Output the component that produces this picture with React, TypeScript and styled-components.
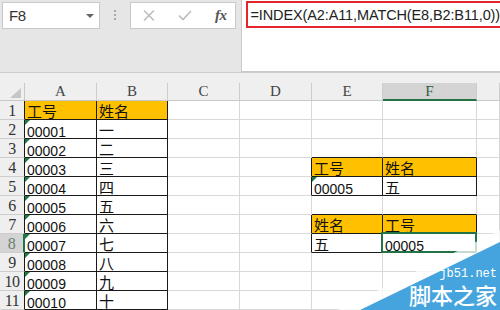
import React from "react";
import styled, { createGlobalStyle } from "styled-components";

const GlobalStyle = createGlobalStyle`
  html, body {
    margin: 0;
    padding: 0;
    background: #ffffff;
    overflow: hidden;
  }
  * {
    box-sizing: border-box;
  }
`;

// last column is only partly on screen, so its letter is not visible
const COLS = ["A", "B", "C", "D", "E", "F", ""];
const ROW_COUNT = 11;
const SELECTED = { col: 5, row: 8 };

type CellData = { text: string; fill?: boolean; tri?: boolean };

const NUMERALS = ["一", "二", "三", "四", "五", "六", "七", "八", "九", "十"];

const cells: Record<string, CellData> = {
  A1: { text: "工号", fill: true },
  B1: { text: "姓名", fill: true },
  E4: { text: "工号", fill: true },
  F4: { text: "姓名", fill: true },
  E5: { text: "00005", tri: true },
  F5: { text: "五" },
  E7: { text: "姓名", fill: true },
  F7: { text: "工号", fill: true },
  E8: { text: "五" },
  F8: { text: "00005" },
};
NUMERALS.forEach((n, i) => {
  cells[`A${i + 2}`] = { text: `0000${i + 1}`.slice(-5), tri: true };
  cells[`B${i + 2}`] = { text: n };
});

// ranges that carry thin black borders
const boxes = [
  { c1: 0, c2: 1, r1: 1, r2: 11 },
  { c1: 4, c2: 5, r1: 4, r2: 5 },
  { c1: 4, c2: 5, r1: 7, r2: 8 },
];

const isBoxed = (c: number, r: number) =>
  boxes.some((b) => c >= b.c1 && c <= b.c2 && r >= b.r1 && r <= b.r2);

const GRID = "#d9d9d9";
const INK = "#1a1a1a";
const GREEN = "#217346";

const Page = styled.div`
  position: relative;
  width: 500px;
  height: 310px;
  overflow: hidden;
  display: flex;
  flex-direction: column;
  font-family: "Liberation Sans", "Noto Sans CJK SC", sans-serif;
`;

const Toolbar = styled.div`
  display: flex;
  align-items: flex-start;
  flex: none;
  height: 72px;
  padding-left: 2px;
  background: #e6e6e6;
`;

const NameBox = styled.div`
  display: flex;
  align-items: center;
  justify-content: space-between;
  width: 100px;
  height: 27px;
  margin-top: 2px;
  padding: 0 5px 0 6px;
  background: #ffffff;
  border: 1px solid #c9c9c9;
  color: #333;
  font-size: 15px;
  letter-spacing: -0.5px;
`;

const Caret = styled.span`
  width: 0;
  height: 0;
  border-left: 4px solid transparent;
  border-right: 4px solid transparent;
  border-top: 4px solid #666;
`;

const Grip = styled.div`
  display: flex;
  flex-direction: column;
  align-items: center;
  gap: 2px;
  width: 31px;
  padding-top: 10px;
`;

const GripDot = styled.span`
  width: 2px;
  height: 2px;
  background: #a9a9a9;
`;

const FxBox = styled.div`
  display: flex;
  align-items: center;
  gap: 23px;
  width: 108px;
  height: 27px;
  margin-top: 2px;
  padding-left: 12px;
  background: #ffffff;
  border: 1px solid #c9c9c9;
`;

const FxLabel = styled.span`
  font-family: "Liberation Serif", serif;
  font-style: italic;
  font-weight: bold;
  font-size: 15px;
  color: #555;
  letter-spacing: -0.5px;
`;

const FormulaBox = styled.div`
  flex: 1;
  height: 72px;
  margin-left: 5px;
  padding: 1px 0 0 4px;
  background: #ffffff;
  border-left: 1px solid #c9c9c9;
  border-bottom: 1px solid #c9c9c9;
`;

const FormulaHighlight = styled.div`
  display: flex;
  align-items: center;
  height: 27px;
  padding-left: 3px;
  border: 2.5px solid #e3262c;
  border-right: none;
  color: #222;
  font-size: 14.5px;
  letter-spacing: -0.12px;
  white-space: nowrap;
`;

const HeaderStrip = styled.div`
  flex: none;
  height: 11px;
  background: #efefef;
  border-top: 1px solid #cdcdcd;
`;

const Sheet = styled.div`
  display: grid;
  grid-template-columns: 25px 72px 71px 72px 72px 71px 94px 1fr;
  grid-template-rows: 18px;
  grid-auto-rows: 19px;
`;

const Corner = styled.div`
  position: relative;
  background: #efefef;
  border-right: 1px solid #c9c9c9;
  border-bottom: 1px solid #c9c9c9;

  &::after {
    content: "";
    position: absolute;
    right: 3px;
    bottom: 2px;
    border-left: 11px solid transparent;
    border-bottom: 10px solid #c6c6c6;
  }
`;

const ColHeader = styled.div<{ $active?: boolean }>`
  display: flex;
  align-items: center;
  justify-content: center;
  background: ${(p) => (p.$active ? "#d4d4d4" : "#efefef")};
  border-right: 1px solid #cdcdcd;
  border-bottom: ${(p) => (p.$active ? `2px solid ${GREEN}` : "1px solid #c9c9c9")};
  color: ${(p) => (p.$active ? "#2f5f45" : "#444")};
  font-family: "Liberation Serif", serif;
  font-size: 15px;
`;

const RowHeader = styled.div<{ $active?: boolean; $edge: string }>`
  display: flex;
  align-items: center;
  justify-content: center;
  padding-top: 1px;
  background: ${(p) => (p.$active ? "#d4d4d4" : "#efefef")};
  border-right: ${(p) => (p.$active ? `2px solid ${GREEN}` : `1px solid ${p.$edge}`)};
  border-bottom: 1px solid #cdcdcd;
  color: ${(p) => (p.$active ? "#6a7d70" : "#333")};
  font-family: "Liberation Serif", serif;
  font-size: 16px;
  letter-spacing: -0.5px;
`;

const Cell = styled.div<{ $fill?: boolean; $right: string; $bottom: string; $cjk: boolean }>`
  position: relative;
  display: flex;
  align-items: flex-end;
  padding-left: 2px;
  background: ${(p) => (p.$fill ? "#ffc000" : "#ffffff")};
  border-right: 1px solid ${(p) => p.$right};
  border-bottom: 1px solid ${(p) => p.$bottom};
  color: #111;
  font-size: ${(p) => (p.$cjk ? "15px" : "14px")};
  line-height: ${(p) => (p.$cjk ? "15px" : "12px")};
  white-space: nowrap;
`;

const TextFlag = styled.span`
  position: absolute;
  top: 0;
  left: 0;
  border-top: 5px solid #1f7a45;
  border-right: 5px solid transparent;
`;

const SelectionFrame = styled.span`
  position: absolute;
  left: -2px;
  top: -2px;
  right: -1px;
  bottom: -1px;
  border: 2px solid ${GREEN};
  z-index: 2;
`;

const Watermark = styled.div`
  position: absolute;
  right: 0;
  bottom: 0;
  width: 170px;
  height: 95px;
  z-index: 5;
  pointer-events: none;
`;

const WatermarkShape = styled.svg`
  position: absolute;
  inset: 0;
`;

const WatermarkText = styled.div`
  position: absolute;
  right: 3px;
  bottom: 5px;
  display: flex;
  flex-direction: column;
  align-items: flex-end;
  gap: 3px;
  color: #ffffff;
`;

const SiteUrl = styled.span`
  font-family: "Liberation Mono", monospace;
  font-size: 12px;
  line-height: 12px;
`;

const SiteName = styled.span`
  font-family: "Noto Sans CJK SC", sans-serif;
  font-size: 22px;
  line-height: 22px;
  font-weight: 500;
`;

const isCjk = (s: string) => /[\u4e00-\u9fff]/.test(s);

const App = () => {
  const rows = Array.from({ length: ROW_COUNT }, (_, i) => i + 1);

  return (
    <Page>
      <GlobalStyle />
      <Toolbar>
        <NameBox>
          F8
          <Caret />
        </NameBox>
        <Grip>
          <GripDot />
          <GripDot />
          <GripDot />
        </Grip>
        <FxBox>
          <svg width="12" height="11" viewBox="0 0 12 11">
            <path d="M1 0.5 L11 10.5 M11 0.5 L1 10.5" stroke="#bdbdbd" strokeWidth="1.5" fill="none" />
          </svg>
          <svg width="14" height="11" viewBox="0 0 14 11">
            <path d="M1 5.5 L5 9.5 L13 1" stroke="#bdbdbd" strokeWidth="1.6" fill="none" />
          </svg>
          <FxLabel>fx</FxLabel>
        </FxBox>
        <FormulaBox>
          <FormulaHighlight>=INDEX(A2:A11,MATCH(E8,B2:B11,0))</FormulaHighlight>
        </FormulaBox>
      </Toolbar>
      <HeaderStrip />
      <Sheet>
        <Corner />
        {COLS.map((c, ci) => (
          <ColHeader key={ci} $active={ci === SELECTED.col}>
            {c}
          </ColHeader>
        ))}
        {rows.map((r) => (
          <React.Fragment key={r}>
            <RowHeader $active={r === SELECTED.row} $edge={isBoxed(0, r) ? INK : "#c9c9c9"}>
              {r}
            </RowHeader>
            {COLS.map((c, ci) => {
              const data = c ? cells[`${c}${r}`] : undefined;
              const right = isBoxed(ci, r) || isBoxed(ci + 1, r) ? INK : GRID;
              const bottom = isBoxed(ci, r) || isBoxed(ci, r + 1) ? INK : GRID;
              const selected = ci === SELECTED.col && r === SELECTED.row;
              return (
                <Cell
                  key={ci}
                  $fill={data?.fill}
                  $right={right}
                  $bottom={bottom}
                  $cjk={data ? isCjk(data.text) : false}
                >
                  {data?.tri && <TextFlag />}
                  {data?.text}
                  {selected && <SelectionFrame />}
                </Cell>
              );
            })}
          </React.Fragment>
        ))}
      </Sheet>
      <Watermark>
        <WatermarkShape width="170" height="95" viewBox="0 0 170 95">
          <polygon points="8,95 170,15 170,95" fill="#ffffff" fillOpacity="0.75" />
          <polygon points="30,95 170,27 170,95" fill="#45a4de" />
        </WatermarkShape>
        <WatermarkText>
          <SiteUrl>jb51.net</SiteUrl>
          <SiteName>脚本之家</SiteName>
        </WatermarkText>
      </Watermark>
    </Page>
  );
};

export default App;
